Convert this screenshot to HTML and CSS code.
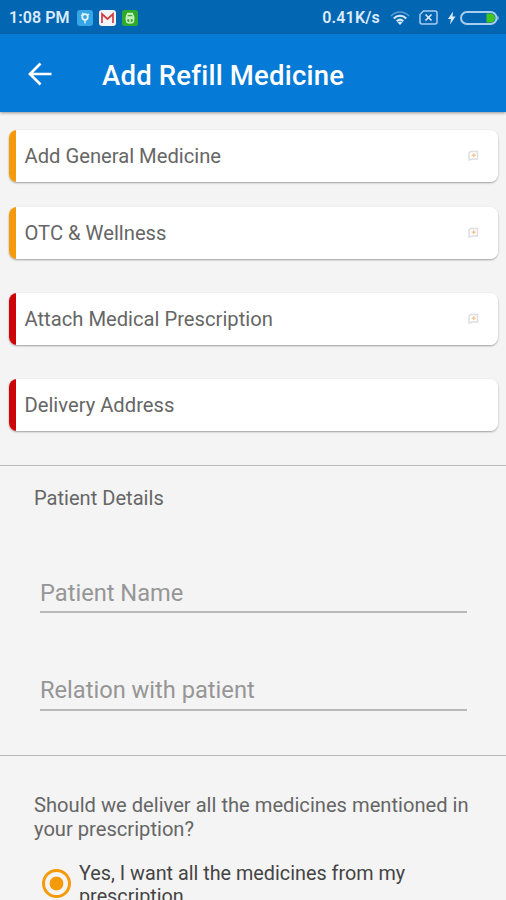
FILE: index.html
```html
<!DOCTYPE html>
<html lang="en">
<head>
<meta charset="utf-8">
<meta name="viewport" content="width=device-width">
<title>Add Refill Medicine</title>
<link rel="stylesheet" href="styles.css">
</head>
<body>
<svg class="defs" aria-hidden="true">
  <symbol id="add-note" viewBox="0 0 12 12">
    <path d="M3.500 1.500h7v7.500h-5l-3.500 1V3z" fill="none" stroke="#dfdddf" stroke-width="1.500"/>
    <path d="M6.700 3.300v4M4.700 5.300h4" stroke="#f3c790" stroke-width="1.400"/>
  </symbol>
</svg>
<div class="status">
  <span class="clock">1:08 PM</span>
  <svg class="apps" width="62" height="18" viewBox="0 0 62 18">
    <rect x="0" y="1" width="16" height="16" rx="3" fill="#37a6e6"/>
    <circle cx="8" cy="8" r="2.800" fill="none" stroke="#e4f5ff" stroke-width="1.700"/>
    <path d="M8 10.500v4M4 6l2 1M12 5l-2 1.500M5 4l1.500 1" stroke="#e4f5ff" stroke-width="1.300"/>
    <rect x="22" y="1" width="17" height="16" rx="3" fill="#f4f5f8"/>
    <path d="M25 14V5l5.500 5L36 5v9" fill="none" stroke="#d33d42" stroke-width="1.700"/>
    <rect x="45" y="1" width="16" height="16" rx="2.500" fill="#2faa2b"/>
    <path d="M50 4.500h6M49.500 8c0-4 7-4 7 0zM48.500 9.500h9M49.500 10v2c0 2.500 7 2.500 7 0v-2M53 10v3" fill="none" stroke="#c8f0c0" stroke-width="1.500"/>
  </svg>
  <span class="rate">0.41K/s</span>
  <svg class="wifi" width="20" height="16" viewBox="0 0 20 16">
    <path d="M1 6C6 .7 14 .7 19 6" fill="none" stroke="#5b9cd4" stroke-width="1.600"/>
    <path d="M3.800 8.500c3.500-3.700 8.900-3.700 12.400 0M6.700 11.300c2-2 4.600-2 6.600 0" fill="none" stroke="#dcecfc" stroke-width="2"/>
    <path d="M7.500 12.300L10 15l2.500-2.700c-1.500-1.200-3.500-1.200-5 0z" fill="#dcecfc"/>
  </svg>
  <svg class="sim" width="19" height="15" viewBox="0 0 19 15">
    <path d="M4.500 1H16a2 2 0 0 1 2 2v9a2 2 0 0 1-2 2H3a2 2 0 0 1-2-2V4.500z" fill="none" stroke="#a9cdef" stroke-width="1.500"/>
    <path d="M6.500 4.500l6 6M12.500 4.500l-6 6" stroke="#dcecfc" stroke-width="1.600"/>
  </svg>
  <svg class="battery" width="51" height="16" viewBox="0 0 51 16">
    <path d="M5 1.500L0 9h3l-1 5.500L7.500 6.500H4.500z" fill="#dcecfc"/>
    <rect x="13" y="2" width="35.500" height="12" rx="6" fill="none" stroke="#a9cdef" stroke-width="2"/>
    <path d="M49.500 5.500c1.500 1 1.500 4 0 5z" fill="#a9cdef"/>
    <path d="M38.500 3.500h4a4.500 4.500 0 0 1 0 9h-4z" fill="#42c51e"/>
  </svg>
</div>
<header class="appbar">
  <svg class="back" width="24" height="24" viewBox="0 0 24 24"><path d="M23.500 12H2.500M12.500 1.500L2 12l10.500 10.500" fill="none" stroke="#fff" stroke-width="2.700"/></svg>
  <h1><span>Add Refill Medicine</span></h1>
</header>
<main>
  <section class="cards">
    <div class="card"><span>Add General Medicine</span><svg class="add"><use href="#add-note"/></svg></div>
    <div class="card"><span>OTC &amp; Wellness</span><svg class="add"><use href="#add-note"/></svg></div>
    <div class="card required"><span>Attach Medical Prescription</span><svg class="add"><use href="#add-note"/></svg></div>
    <div class="card required"><span>Delivery Address</span></div>
  </section>
  <section class="patient">
    <h2><span>Patient Details</span></h2>
    <div class="field"><span>Patient Name</span></div>
    <div class="field relation"><span>Relation with patient</span></div>
  </section>
  <section class="delivery">
    <p><span>Should we deliver all the medicines mentioned in</span><br><span>your prescription?</span></p>
    <div class="option"><i class="radio"></i><div><span>Yes, I want all the medicines from my</span><br><span>prescription</span></div></div>
  </section>
</main>
</body>
</html>
```
FILE: styles.css
```css
* { box-sizing: border-box; }
body { margin: 0; height: 900px; overflow: hidden; background: #f4f4f4; font-family: Roboto, sans-serif; color: #666; }
.defs { display: none; }
.status { height: 34px; background: #0366b3; color: #dcecfc; display: flex; align-items: center; padding: 1px 7px 0 9px; font-size: 16px; font-weight: 600; }
.clock { width: 68px; letter-spacing: .1px; white-space: nowrap; }
.rate { margin-left: auto; letter-spacing: .2px; }
.wifi { margin-left: 10px; }
.sim { margin-left: 9px; }
.battery { margin-left: 10px; }
.appbar { height: 78px; background: #057ad6; color: #fff; display: flex; align-items: center; padding: 2px 28px 0; box-shadow: 0 1px 3px rgba(0,0,0,.4); }
h1 { margin: 3px 0 0 50px; font-size: 27.500px; line-height: 32px; font-weight: 500; letter-spacing: .2px; white-space: nowrap; }
.cards { height: 354px; padding: 18px 8px 0 9px; border-bottom: 1px solid #b9b9b9; }
.card { height: 52px; margin-bottom: 26px; display: flex; align-items: center; justify-content: space-between; padding: 0 19px 0 15.500px; border-radius: 8px; background: linear-gradient(to right, #f59b0b 7px, #fff 7px); font-size: 20.200px; box-shadow: 0 1px 2px 0 rgba(0,0,0,.36); }
.card:nth-child(n+2) { margin-bottom: 34px; }
.card:nth-child(2) { margin-top: -1px; }
.card.required { background: linear-gradient(to right, #cc0509 7px, #fff 7px); }
.add { width: 12px; height: 12px; margin-bottom: 1px; }
.patient { height: 290px; border-bottom: 1px solid #b9b9b9; padding: 20px 39px 0 34px; }
h2 { margin: 0 0 64px; font-size: 20.100px; line-height: 24px; font-weight: 400; }
.field { height: 39px; margin-left: 6px; padding-top: 2px; border-bottom: 2px solid #b8b8b8; font-size: 23.650px; line-height: 34px; color: #969696; }
.relation { margin-top: 59px; padding-top: 1px; }
.delivery { padding: 37px 34px 0; font-size: 20.150px; line-height: 24px; }
.delivery p { margin: 0; white-space: nowrap; }
.option { display: flex; margin: 20.500px 0 0 8px; color: #444; font-size: 19.800px; line-height: 23px; white-space: nowrap; }
.radio { width: 29px; height: 29px; margin: 7px 8px 0 0; flex: none; border: 3px solid #f59b0b; border-radius: 50%; background: radial-gradient(circle, #f59b0b 6.500px, transparent 7.300px); }
```
